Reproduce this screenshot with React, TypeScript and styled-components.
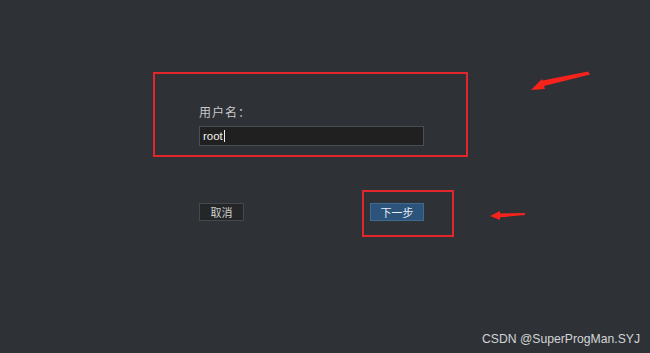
import styled, { createGlobalStyle } from 'styled-components';

const GlobalStyle = createGlobalStyle`
  html, body {
    margin: 0;
    padding: 0;
    background: #2e3236;
    font-family: "Liberation Sans", "Noto Sans CJK SC", sans-serif;
  }
`

const Page = styled('div')`
  position: relative;
  width: 650px;
  height: 353px;
  overflow: hidden;
  padding: 72px 0 0 153px;
  box-sizing: border-box;
`

const Highlight = styled('div')`
  width: 315px;
  height: 85px;
  box-sizing: border-box;
  border: 2px solid #e3262b;
  padding: 32px 0 0 44px;
  display: flex;
  flex-direction: column;
  row-gap: 6px;
`

const Label = styled('div')`
  font-size: 12px;
  line-height: 14px;
  color: #c9c9c9;
  letter-spacing: 1px;
`

const Input = styled('div')`
  width: 225px;
  height: 20px;
  box-sizing: border-box;
  background: #202020;
  border: 1px solid #4c4f52;
  color: #f0f0f0;
  font-size: 11.5px;
  line-height: 18px;
  padding-left: 3px;
  display: flex;
  align-items: center;
  .caret{
    display: inline-block;
    width: 1.5px;
    height: 12px;
    background: #f0f0f0;
    margin-left: 1px;
  }
`

const ButtonRow = styled('div')`
  display: flex;
  align-items: flex-start;
  margin-top: 33px;
  padding-left: 46px;
`

const Button = styled('div')<{ primary?: boolean }>`
  width: ${p => (p.primary ? '54px' : '45px')};
  height: 18px;
  box-sizing: border-box;
  display: flex;
  align-items: center;
  justify-content: center;
  font-size: 11px;
  color: ${p => (p.primary ? '#e6eef6' : '#d0d0d0')};
  background: ${p => (p.primary ? '#2c547a' : '#242628')};
  border: 1px solid ${p => (p.primary ? '#3f6a92' : '#46494c')};
  margin-top: ${p => (p.primary ? '0' : '13px')};
`

const Marked = styled('div')`
  margin-left: 118px;
  width: 92px;
  height: 47px;
  box-sizing: border-box;
  border: 2px solid #e3262b;
  padding: 11px 0 0 6px;
`

const Arrow = styled('svg')<{ left: number, top: number }>`
  position: absolute;
  left: ${p => p.left}px;
  top: ${p => p.top}px;
`

const Watermark = styled('div')`
  position: absolute;
  right: 10px;
  top: 332px;
  font-size: 12.2px;
  color: #d2d4d6;
  font-family: "Liberation Sans", sans-serif;
`

export default function App() {
  return (
    <>
      <GlobalStyle />
      <Page>
        <Highlight>
          <Label>用户名：</Label>
          <Input>root<span className='caret' /></Input>
        </Highlight>
        <ButtonRow>
          <Button>取消</Button>
          <Marked>
            <Button primary>下一步</Button>
          </Marked>
        </ButtonRow>
        <Arrow left={528} top={70} width={64} height={24} viewBox='0 0 64 24'>
          <polygon points='60,1.5 62,4.5 12,17 12,11' fill='#f5231c' />
          <polygon points='3,20 14,9 17,19' fill='#f5231c' />
        </Arrow>
        <Arrow left={488} top={209} width={40} height={12} viewBox='0 0 40 12'>
          <polygon points='37,4 37,6 10,8.5 10,4.5' fill='#f5231c' />
          <polygon points='2,7 12,2 12,11' fill='#f5231c' />
        </Arrow>
        <Watermark>CSDN @SuperProgMan.SYJ</Watermark>
      </Page>
    </>
  );
}
